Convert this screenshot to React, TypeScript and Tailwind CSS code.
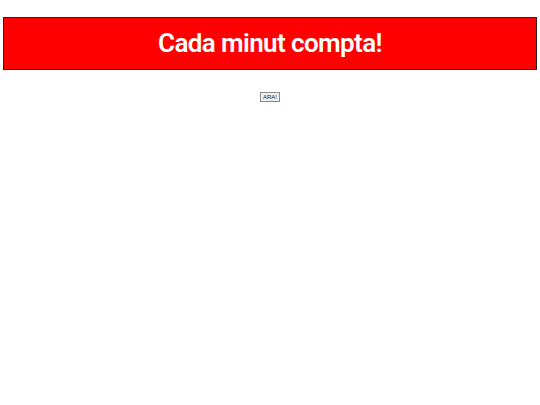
export default function App() {
  return (
    <div className="min-h-[405px] bg-white pt-[17px]">
      <div className="mx-[3px] flex h-[53px] items-center justify-center border border-[#3a1a1a] bg-[#ff0000]">
        <h1
          className="pb-[1px] text-[26px] font-semibold leading-none tracking-[-0.6px] text-white"
          style={{ fontFamily: 'Roboto, "Liberation Sans", sans-serif' }}
        >
          Cada minut compta!
        </h1>
      </div>
      <div className="mt-[22px] flex justify-center">
        <button
          className="h-[10px] w-[20px] border border-[#8a8a8a] bg-[#efefef] text-[6px] leading-none text-[#222]"
          style={{ fontFamily: '"Liberation Sans", Arial, sans-serif' }}
        >
          ARA!
        </button>
      </div>
    </div>
  );
}
